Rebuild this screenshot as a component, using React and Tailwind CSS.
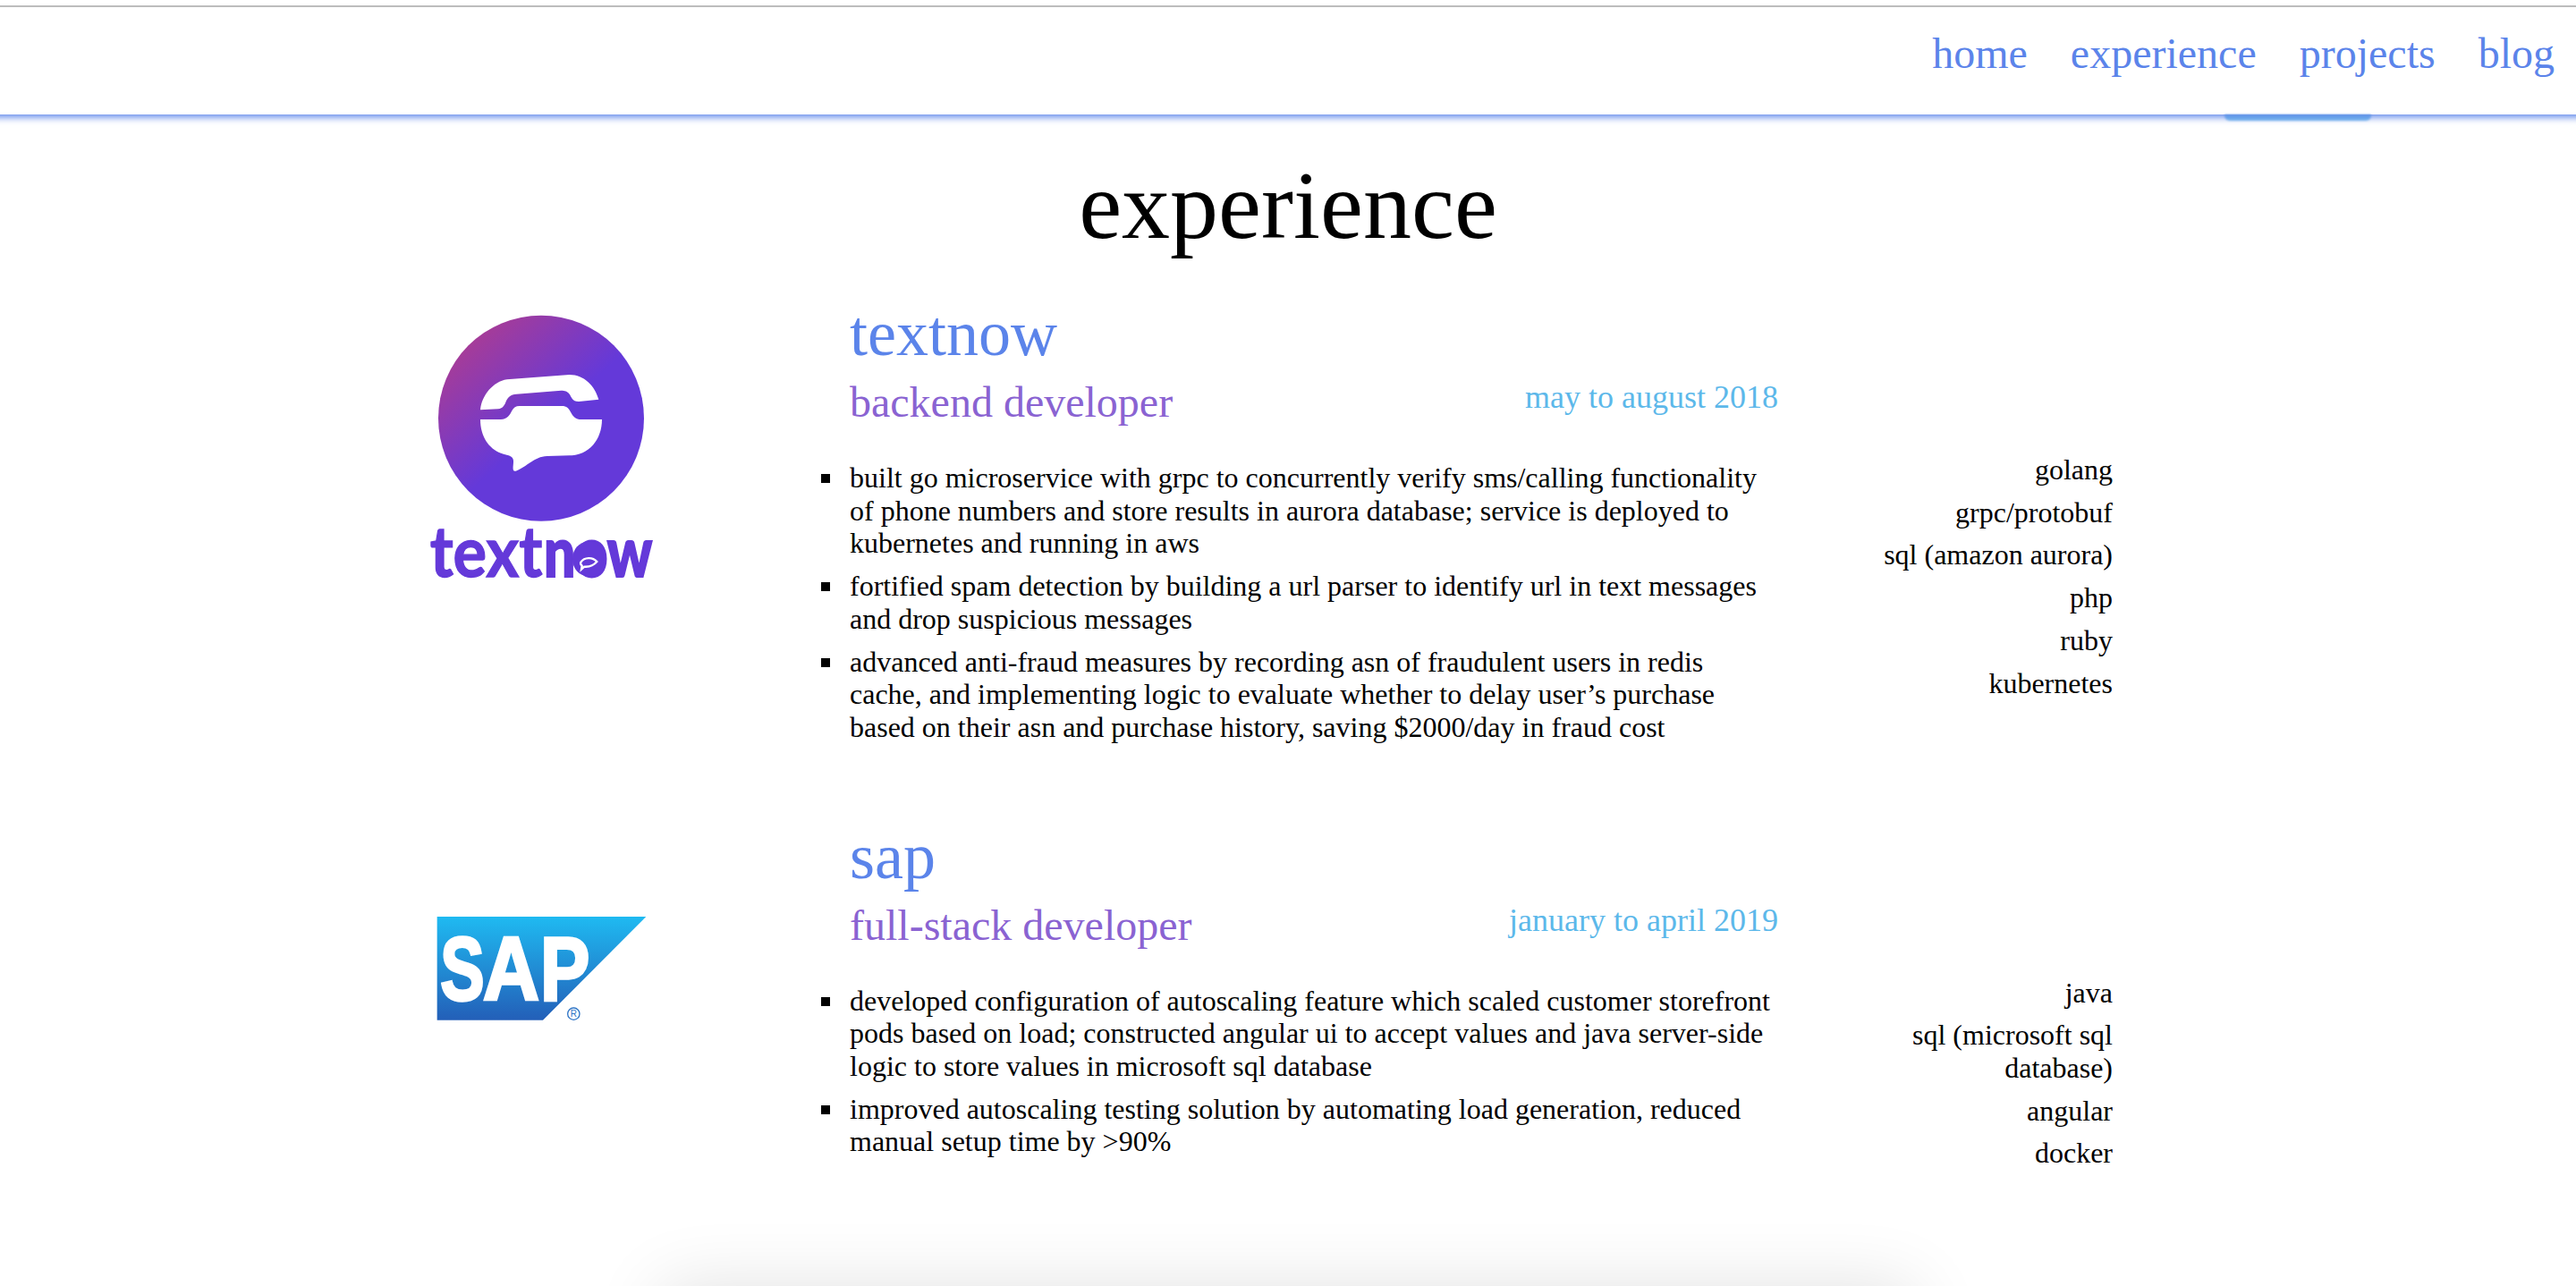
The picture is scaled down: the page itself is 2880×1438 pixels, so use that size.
const serif = "font-['Liberation_Serif',serif]";

function TextNowLogo() {
  return (
    <svg viewBox="0 0 1020 1041" className="w-[340px] h-[347px] block">
      <defs>
        <linearGradient id="tn" gradientUnits="userSpaceOnUse" x1="230" y1="170" x2="500" y2="470">
          <stop offset="0" stopColor="#ab3c93" />
          <stop offset="1" stopColor="#6439d9" />
        </linearGradient>
      </defs>
      <circle cx="495" cy="443" r="345" fill="url(#tn)" />
      <path fill="#fff" d="M291 415C296 365 335 320 380 313L590 297C640 297 675 335 688 380L622 387C600 388 596 370 590 362C582 352 575 350 562 350L412 362C392 364 384 372 378 385C372 400 368 410 350 412Z" />
      <path fill="#fff" d="M291 447L360 447C382 447 390 432 397 418C403 407 410 402 422 402L565 402C580 402 588 410 594 422C602 437 610 447 630 447L699 447C699 515 655 568 590 568L515 570C470 572 450 605 410 620C395 624 403 600 402 585C400 566 380 568 360 560C320 545 291 505 291 447Z" />
      <text transform="translate(122 975) scale(0.89 1)" fontFamily="Lato, sans-serif" fontWeight="700" fontSize="237" fill="#6439d9" stroke="#6439d9" strokeWidth="4">text</text>
      <text transform="translate(504 975) scale(0.79 1)" fontFamily="Lato, sans-serif" fontWeight="900" fontSize="237" fill="#6439d9" stroke="#6439d9" strokeWidth="6">now</text>
      <ellipse cx="652" cy="915" rx="52" ry="58" fill="#6439d9" />
      <path fill="#6439d9" stroke="#fff" strokeWidth="7" d="M628 926C640 908 668 908 682 924C670 938 652 942 640 941L630 950L632 938C628 934 626 930 628 926Z" />
    </svg>
  );
}

function SapLogo() {
  return (
    <svg viewBox="0 0 840 510" className="w-[280px] h-[170px] block">
      <defs>
        <linearGradient id="sap" x1="0" y1="0" x2="0" y2="1">
          <stop offset="0" stopColor="#1fbaf1" />
          <stop offset="1" stopColor="#235fb8" />
        </linearGradient>
      </defs>
      <polygon points="86,75 787,75 441,422 86,422" fill="url(#sap)" />
      <g fontFamily="Liberation Sans, sans-serif" fontWeight="700" fontSize="300" fill="#fff" stroke="#fff" strokeWidth="10">
        <text transform="translate(97 353) scale(0.74 1)">S</text>
        <text transform="translate(240 353) scale(0.87 1)">A</text>
        <text transform="translate(432 353) scale(0.83 1)">P</text>
      </g>
      <circle cx="544" cy="401" r="20" fill="none" stroke="#2f75c6" strokeWidth="4" />
      <text x="544" y="412" textAnchor="middle" fontFamily="Liberation Sans, sans-serif" fontSize="30" fill="#2f75c6">R</text>
    </svg>
  );
}

function Job({ logo, logoClass, company, role, date, bullets, tech, className }) {
  return (
    <section className={`flex items-start ${className}`}>
      <div className={`w-[340px] shrink-0 ${logoClass}`}>{logo}</div>
      <div className="ml-[170px] w-[1038px] shrink-0 pt-[18px]">
        <h2 className="text-[72px] leading-[82px] text-[#5b84ea]">{company}</h2>
        <div className="flex items-start justify-between mt-[8px]">
          <h3 className="text-[48px] leading-[56px] text-[#8a63d2]">{role}</h3>
          <span className="text-[36px] leading-[42px] text-[#5cb8ea] pt-[1px]">{date}</span>
        </div>
        <ul className="mt-[38px] text-[32px] leading-[36.7px] text-black">
          {bullets.map((b) => (
            <li key={b} className="flex mb-[11px]">
              <span className="w-[10px] h-[10px] -ml-[32px] mr-[22px] mt-[14px] shrink-0 bg-black" />
              <span>{b}</span>
            </li>
          ))}
        </ul>
      </div>
      <ul className="ml-auto w-[272px] pt-[193px] text-right text-[32px] leading-[36.7px] text-black">
        {tech.map((t) => (
          <li key={t} className="mb-[11px]">{t}</li>
        ))}
      </ul>
    </section>
  );
}

export default function App() {
  return (
    <div className={`${serif} h-[1438px] overflow-hidden bg-white`}>
      <div className="relative z-10 h-[8px] bg-white border-b-2 border-[#bdbdbd]" />
      <header className="relative h-[120px] -mx-[12px] flex items-start pt-[24px] justify-end gap-[48px] pr-[36px] bg-white shadow-[0_3px_8px_0_#5b84ea]">
        <div className="absolute left-[2499px] top-full w-[164px] h-[7px] rounded-b-[6px] blur-[1px] bg-gradient-to-b from-[#5a8ee6] to-[#7ab8ee]" />
        <a className="relative text-[48px] leading-[56px] text-[#5b84ea]">home</a>
        <a className="relative text-[48px] leading-[56px] text-[#5b84ea]">experience</a>
        <a className="relative text-[48px] leading-[56px] text-[#5b84ea]">projects</a>
        <a className="relative text-[48px] leading-[56px] text-[#5b84ea]">blog</a>
      </header>
      <h1 className="text-[108px] leading-[124px] text-center text-black mt-[40px]">experience</h1>
      <main className="w-[1922px] ml-[440px]">
        <Job
          className="mt-[22px]"
          logoClass="mt-[6px]"
          logo={<TextNowLogo />}
          company="textnow"
          role="backend developer"
          date="may to august 2018"
          bullets={[
            "built go microservice with grpc to concurrently verify sms/calling functionality of phone numbers and store results in aurora database; service is deployed to kubernetes and running in aws",
            "fortified spam detection by building a url parser to identify url in text messages and drop suspicious messages",
            "advanced anti-fraud measures by recording asn of fraudulent users in redis cache, and implementing logic to evaluate whether to delay user’s purchase based on their asn and purchase history, saving $2000/day in fraud cost",
          ]}
          tech={["golang", "grpc/protobuf", "sql (amazon aurora)", "php", "ruby", "kubernetes"]}
        />
        <Job
          className="mt-[56px]"
          logoClass="mt-[101px] pl-[20px]"
          logo={<SapLogo />}
          company="sap"
          role="full-stack developer"
          date="january to april 2019"
          bullets={[
            "developed configuration of autoscaling feature which scaled customer storefront pods based on load; constructed angular ui to accept values and java server-side logic to store values in microsoft sql database",
            "improved autoscaling testing solution by automating load generation, reduced manual setup time by >90%",
          ]}
          tech={["java", "sql (microsoft sql database)", "angular", "docker"]}
        />
      </main>
      <div className="w-[1400px] h-[200px] mx-auto mt-[120px] shadow-[0_0_80px_0_rgba(0,0,0,0.12)]" />
    </div>
  );
}
